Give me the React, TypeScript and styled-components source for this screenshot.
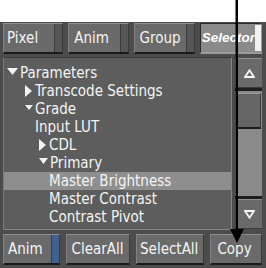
import React from "react";
import styled, { createGlobalStyle } from "styled-components";

const FONT = '"DejaVu Sans Condensed", "DejaVu Sans", sans-serif';

const GlobalStyle = createGlobalStyle`
  html, body { margin: 0; padding: 0; background: #ffffff; }
  body { font-family: ${FONT}; font-stretch: condensed; }
  * { box-sizing: border-box; }
`;

const Screen = styled.div`
  position: relative;
  width: 266px;
  height: 268px;
  overflow: hidden;
`;

const TopBlank = styled.div`
  height: 22px;
  background: #ffffff;
`;

const Main = styled.div`
  height: 246px;
  background: #4c4c4c;
  padding: 1px 4px 0 3px;
  display: flex;
  flex-direction: column;
`;

const ButtonRow = styled.div<{ $gap: number }>`
  display: flex;
  gap: ${(p) => p.$gap}px;
  height: 31px;
`;

type Strip = "dark" | "white" | "blue" | "none";

const Btn = styled.div<{ $w: number; $active?: boolean }>`
  width: ${(p) => p.$w}px;
  height: 31px;
  display: flex;
  align-items: stretch;
  background: ${(p) => (p.$active ? "#8a8a8a" : "#6a6a6a")};
  border-top: 1px solid ${(p) => (p.$active ? "#2a2a2a" : "#8e8e8e")};
  border-left: 1px solid ${(p) => (p.$active ? "#2a2a2a" : "#828282")};
  border-right: 1px solid ${(p) => (p.$active ? "#9a9a9a" : "#3a3a3a")};
  border-bottom: 2px solid ${(p) => (p.$active ? "#9a9a9a" : "#1a1a1a")};
`;

const BtnLabel = styled.span<{ $pad: number; $italic?: boolean }>`
  flex: 1;
  display: flex;
  align-items: center;
  padding-left: ${(p) => p.$pad}px;
  color: ${(p) => (p.$italic ? "#ffffff" : "#f4f4f4")};
  font-style: ${(p) => (p.$italic ? "italic" : "normal")};
  font-weight: ${(p) => (p.$italic ? 700 : 400)};
  font-family: ${(p) => (p.$italic ? '"Liberation Sans", sans-serif' : FONT)};
  font-size: ${(p) => (p.$italic ? 13.5 : 15)}px;
  white-space: nowrap;
  padding-bottom: 1px;
`;

const BtnStrip = styled.span<{ $kind: Strip }>`
  width: ${(p) => (p.$kind === "white" ? 6 : 8)}px;
  margin: ${(p) => (p.$kind === "white" ? "1px 0 1px 0" : "0")};
  background: ${(p) =>
    p.$kind === "dark"
      ? "#565656"
      : p.$kind === "white"
      ? "#f2f2f2"
      : p.$kind === "blue"
      ? "#3f6090"
      : "transparent"};
  border-left: 1px solid
    ${(p) => (p.$kind === "dark" ? "#3c3c3c" : p.$kind === "blue" ? "#2c3f5c" : "transparent")};
`;

const Middle = styled.div`
  display: flex;
  gap: 3px;
  margin-top: 3px;
  height: 173px;
`;

const TreePanel = styled.div`
  width: 229px;
  height: 173px;
  background: #5d5d5d;
  border: 1px solid #858585;
  border-top-color: #3a3a3a;
  border-left-color: #7a7a7a;
  padding-top: 6px;
  display: flex;
  flex-direction: column;
  overflow: hidden;
`;

const Row = styled.div<{ $indent: number; $selected?: boolean }>`
  height: 18px;
  flex: none;
  display: flex;
  align-items: center;
  padding-left: ${(p) => p.$indent}px;
  background: ${(p) => (p.$selected ? "#8e8e8e" : "transparent")};
  color: #f4f4f4;
  font-size: 15px;
  white-space: nowrap;
`;

const CaretBox = styled.span<{ $w: number; $dy: number }>`
  width: ${(p) => p.$w}px;
  margin-right: 2px;
  display: flex;
  align-items: center;
  transform: translateY(${(p) => p.$dy}px);
`;

const Scrollbar = styled.div`
  width: 27px;
  height: 171px;
  margin-top: 1px;
  display: flex;
  flex-direction: column;
  background: #1e1e1e;
`;

const ScrollBtn = styled.div`
  height: 30px;
  background: #6a6a6a;
  border-top: 1px solid #909090;
  border-left: 1px solid #7e7e7e;
  border-bottom: 1px solid #3a3a3a;
  display: flex;
  align-items: center;
  justify-content: center;
`;

const Track = styled.div`
  flex: 1;
  margin: 3px 0 3px 0;
  background: #8a8a8a;
  display: flex;
  flex-direction: column;
`;

const Thumb = styled.div`
  height: 36px;
  margin: 2px 1px 0 2px;
  background: #656565;
  border: 1px solid #9a9a9a;
  border-bottom: 2px solid #1e1e1e;
  border-right-color: #3a3a3a;
`;

const BottomRow = styled(ButtonRow)`
  margin-top: 4px;
`;

const Annotation = styled.svg`
  position: absolute;
  left: 226px;
  top: 0;
`;

function Caret({ dir, w }: { dir: "down" | "right"; w: number }) {
  if (dir === "down") {
    const h = Math.round(w * 0.65);
    return (
      <CaretBox $w={w} $dy={-2}>
        <svg width={w} height={h} viewBox={`0 0 ${w} ${h}`}>
          <polygon points={`0,0 ${w},0 ${w / 2},${h}`} fill="#f4f4f4" />
        </svg>
      </CaretBox>
    );
  }
  const h = 12;
  return (
    <CaretBox $w={w} $dy={0}>
      <svg width={w - 1} height={h} viewBox={`0 0 ${w - 1} ${h}`}>
        <polygon points={`0,0 ${w - 1},${h / 2} 0,${h}`} fill="#f4f4f4" />
      </svg>
    </CaretBox>
  );
}

function OutlineTri({ up }: { up: boolean }) {
  return (
    <svg width="11" height="9" viewBox="0 0 11 9">
      <polygon
        points={up ? "5.5,1.2 10,8 1,8" : "1,1 10,1 5.5,7.8"}
        fill="none"
        stroke="#f6f6f6"
        strokeWidth="1.8"
        strokeLinejoin="miter"
      />
    </svg>
  );
}

type Item = {
  label: string;
  indent: number;
  caret?: "down" | "right";
  caretW?: number;
  selected?: boolean;
};

const items: Item[] = [
  { label: "Parameters", indent: 3, caret: "down", caretW: 11 },
  { label: "Transcode Settings", indent: 21, caret: "right", caretW: 8 },
  { label: "Grade", indent: 21, caret: "down", caretW: 8 },
  { label: "Input LUT", indent: 31 },
  { label: "CDL", indent: 35, caret: "right", caretW: 8 },
  { label: "Primary", indent: 35, caret: "down", caretW: 9 },
  { label: "Master Brightness", indent: 45, selected: true },
  { label: "Master Contrast", indent: 45 },
  { label: "Contrast Pivot", indent: 45 },
];

type B = { label: string; w: number; pad: number; strip: Strip; active?: boolean; italic?: boolean };

const topButtons: B[] = [
  { label: "Pixel", w: 61, pad: 3, strip: "dark" },
  { label: "Anim", w: 62, pad: 5, strip: "dark" },
  { label: "Group", w: 61, pad: 4, strip: "dark" },
  { label: "Selector", w: 63, pad: 1, strip: "white", active: true, italic: true },
];

const bottomButtons: B[] = [
  { label: "Anim", w: 57, pad: 4, strip: "blue" },
  { label: "ClearAll", w: 65, pad: 5, strip: "none" },
  { label: "SelectAll", w: 69, pad: 3, strip: "none" },
  { label: "Copy", w: 52, pad: 6, strip: "none" },
];

function ButtonView({ b }: { b: B }) {
  return (
    <Btn $w={b.w} $active={b.active}>
      <BtnLabel $pad={b.pad} $italic={b.italic}>
        {b.label}
      </BtnLabel>
      {b.strip !== "none" && <BtnStrip $kind={b.strip} />}
    </Btn>
  );
}

export default function App() {
  return (
    <Screen>
      <GlobalStyle />
      <TopBlank />
      <Main>
        <ButtonRow $gap={5}>
          {topButtons.map((b) => (
            <ButtonView key={b.label} b={b} />
          ))}
        </ButtonRow>
        <Middle>
          <TreePanel>
            {items.map((it) => (
              <Row key={it.label} $indent={it.indent} $selected={it.selected}>
                {it.caret && <Caret dir={it.caret} w={it.caretW ?? 8} />}
                {it.label}
              </Row>
            ))}
          </TreePanel>
          <Scrollbar>
            <ScrollBtn>
              <OutlineTri up />
            </ScrollBtn>
            <Track>
              <Thumb />
            </Track>
            <ScrollBtn>
              <OutlineTri up={false} />
            </ScrollBtn>
          </Scrollbar>
        </Middle>
        <BottomRow $gap={6}>
          {bottomButtons.map((b) => (
            <ButtonView key={b.label} b={b} />
          ))}
        </BottomRow>
      </Main>
      <Annotation width="20" height="246" viewBox="0 0 20 246">
        <rect x="9.5" y="0" width="2.5" height="232" fill="#000" />
        <polygon points="4,229 18,229 11,243" fill="#000" />
      </Annotation>
    </Screen>
  );
}
